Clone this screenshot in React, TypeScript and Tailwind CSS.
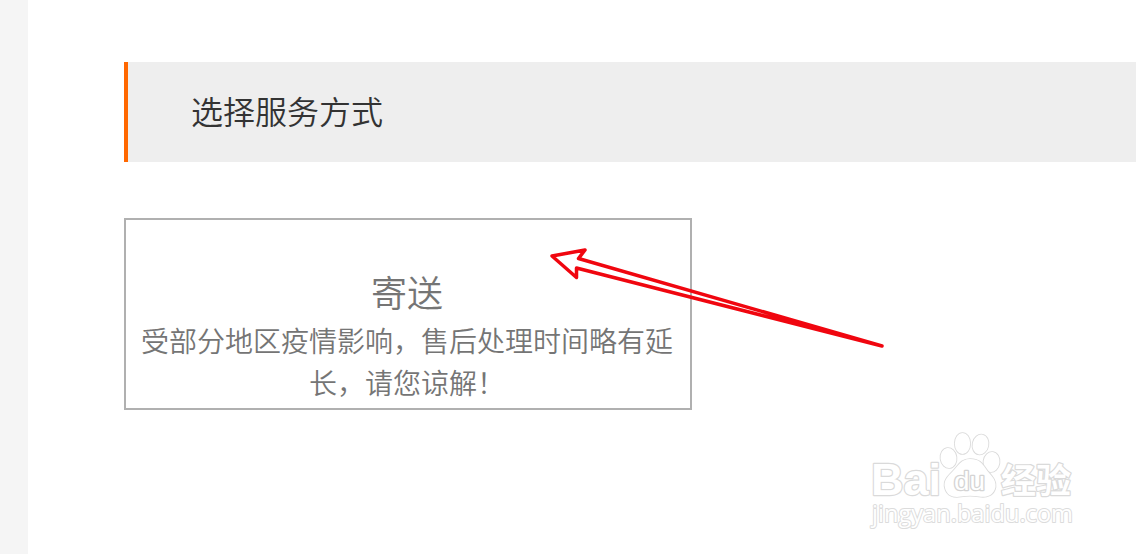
function Arrow() {
  return (
    <svg
      className="absolute left-[426px] top-[28px] h-[104px] w-[336px]"
      viewBox="550 246 336 104"
      fill="none"
      stroke="#f0060f"
      strokeWidth="3.5"
      strokeLinejoin="round"
    >
      <path d="M882 346 L578.5 258.5 L585 250 L552 256 L576.5 277.5 L576.5 268 Z" />
    </svg>
  );
}

function Watermark() {
  return (
    <svg
      className="absolute bottom-[22px] right-[58px] h-[104px] w-[212px]"
      viewBox="866 428 212 104"
      fill="#fff"
      stroke="#dadada"
      strokeWidth="2.4"
      strokeLinejoin="round"
      paintOrder="stroke"
    >
      {/* Wordmark */}
      <text
        x="871"
        y="495"
        textLength="70"
        lengthAdjust="spacingAndGlyphs"
        className="font-['Liberation_Sans',sans-serif] text-[45px] font-bold"
      >
        Bai
      </text>

      {/* Paw */}
      <g strokeWidth="1.7" stroke="#dadada">
        <ellipse cx="948.5" cy="458" rx="8" ry="10" transform="rotate(-8 948.5 458)" />
        <ellipse cx="962.5" cy="443.5" rx="7.7" ry="10.5" />
        <ellipse cx="980.5" cy="444.5" rx="7.9" ry="10" transform="rotate(12 980.5 444.5)" />
        <ellipse cx="991.5" cy="462" rx="8" ry="10" transform="rotate(8 991.5 462)" />
        <path d="M970 459 C961 459 958 466 953 471 C948 476 943 481 945 488 C947 496 954 498 961 496.500 C967 495.500 973 495.500 979 496.500 C987 498 994 495 995.500 487 C996.500 479 990 475 986 469 C982 463 979 459 970 459 Z" />
      </g>
      <text
        x="954"
        y="489.500"
        textLength="31"
        lengthAdjust="spacingAndGlyphs"
        className="font-['Liberation_Sans',sans-serif] text-[26px] font-normal"
        stroke="#d4d4d4"
        strokeWidth="2.6"
      >
        du
      </text>

      <text
        x="1001"
        y="492.500"
        textLength="70"
        lengthAdjust="spacingAndGlyphs"
        className="font-['Noto_Sans_CJK_SC',sans-serif] text-[34px] font-bold"
      >
        经验
      </text>

      <text
        x="872"
        y="522"
        textLength="201"
        lengthAdjust="spacingAndGlyphs"
        className="font-['Open_Sans',sans-serif] text-[23.5px] font-normal"
        stroke="#dcdcdc"
        strokeWidth="2"
      >
        jingyan.baidu.com
      </text>
    </svg>
  );
}

export default function App() {
  return (
    <div className="relative flex h-[554px] w-full overflow-hidden bg-white font-['Noto_Sans_CJK_SC',sans-serif] font-[350]">
      <div className="w-7 shrink-0 bg-[#f5f5f5]" />

      <main className="flex-1 pl-24 pt-[62px]">
        {/* Section Title */}
        <h1 className="flex h-[100px] items-center border-l-4 border-[#ff6700] bg-[#eee] pb-1 pl-[63px] text-[32px] text-[#333]">
          选择服务方式
        </h1>

        {/* Service Option */}
        <div className="relative mt-14 w-[568px]">
          <button className="flex h-[192px] w-full flex-col border-2 border-[#b0b0b0] pl-[13px] pr-[15px] pt-[43px] text-center text-[#757575]">
            <span className="block w-full text-[36px] leading-[56px]">寄送</span>
            <span className="block w-full text-[28px] leading-[42px]">
              受部分地区疫情影响，售后处理时间略有延长，请您谅解！
            </span>
          </button>
          <Arrow />
        </div>
      </main>

      <Watermark />
    </div>
  );
}
